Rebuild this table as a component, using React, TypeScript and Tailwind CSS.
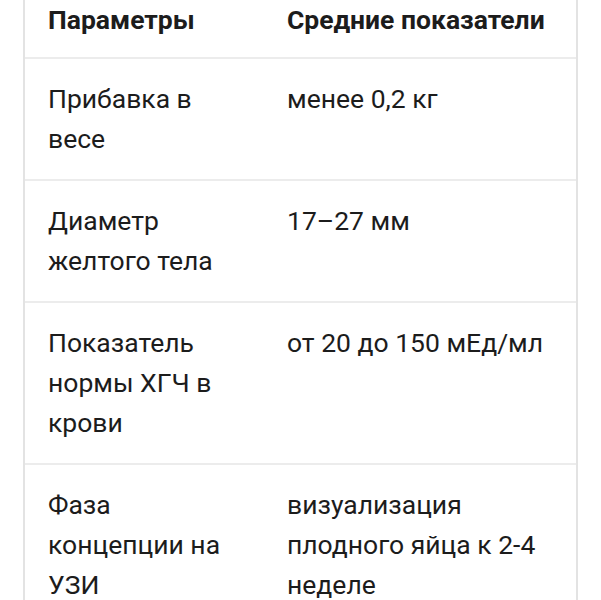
import React from "react";

const rows: [string, string][] = [
  ["Прибавка в весе", "менее 0,2 кг"],
  ["Диаметр желтого тела", "17–27 мм"],
  ["Показатель нормы ХГЧ в крови", "от 20 до 150 мЕд/мл"],
  ["Фаза концепции на УЗИ", "визуализация плодного яйца к 2-4 неделе"],
];

export default function App() {
  return (
    <div
      className="w-[601px] h-[600px] overflow-hidden bg-white text-[#1c1c1c]"
      style={{ fontFamily: "Roboto, 'Noto Sans', sans-serif" }}
    >
      <div className="ml-[23px] mr-[23px] -mt-[23px] border-x-[2px] border-[#e3e3e3]">
        <div className="grid grid-cols-[240px_1fr] border-b-[2px] border-[#ececec]">
          <div className="pl-[23px] pr-[22px] pt-[23px] pb-[17px] text-[26.5px] leading-[40px] font-bold">
            Параметры
          </div>
          <div className="pl-[22px] pr-[10px] pt-[23px] pb-[17px] text-[26.5px] leading-[40px] font-bold whitespace-nowrap">
            Средние показатели
          </div>
        </div>
        {rows.map(([a, b], i) => (
          <div
            key={i}
            className="grid grid-cols-[240px_1fr] border-b-[2px] border-[#ececec]"
          >
            <div className="pl-[23px] pr-[22px] py-5 text-[26.5px] leading-[40px]">{a}</div>
            <div className="pl-[22px] pr-[22px] py-5 text-[26.5px] leading-[40px]">{b}</div>
          </div>
        ))}
      </div>
    </div>
  );
}
